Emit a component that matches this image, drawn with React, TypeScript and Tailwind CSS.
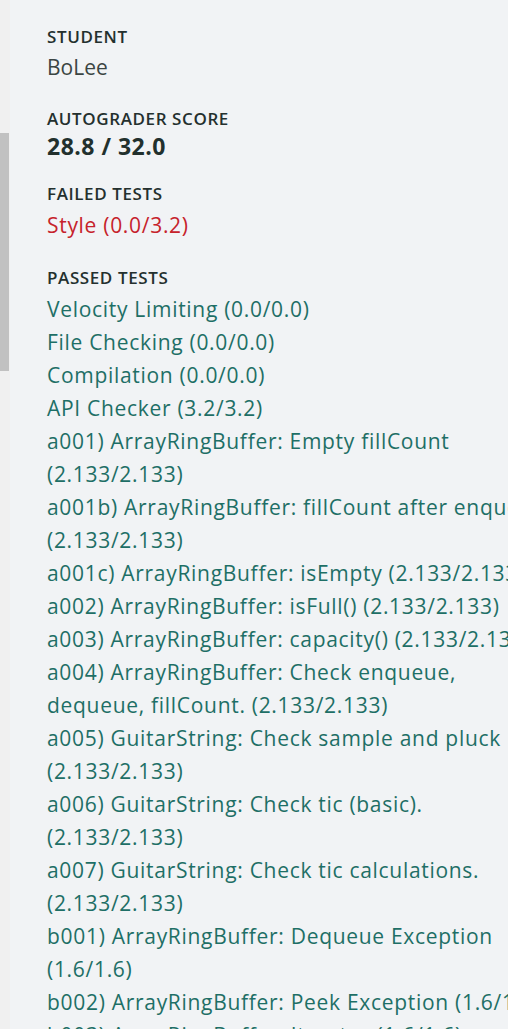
const passed: string[][] = [
  ["Velocity Limiting (0.0/0.0)"],
  ["File Checking (0.0/0.0)"],
  ["Compilation (0.0/0.0)"],
  ["API Checker (3.2/3.2)"],
  ["a001) ArrayRingBuffer: Empty fillCount", "(2.133/2.133)"],
  ["a001b) ArrayRingBuffer: fillCount after enqueue", "(2.133/2.133)"],
  ["a001c) ArrayRingBuffer: isEmpty (2.133/2.133)"],
  ["a002) ArrayRingBuffer: isFull() (2.133/2.133)"],
  ["a003) ArrayRingBuffer: capacity() (2.133/2.133)"],
  ["a004) ArrayRingBuffer: Check enqueue,", "dequeue, fillCount. (2.133/2.133)"],
  ["a005) GuitarString: Check sample and pluck", "(2.133/2.133)"],
  ["a006) GuitarString: Check tic (basic).", "(2.133/2.133)"],
  ["a007) GuitarString: Check tic calculations.", "(2.133/2.133)"],
  ["b001) ArrayRingBuffer: Dequeue Exception", "(1.6/1.6)"],
  ["b002) ArrayRingBuffer: Peek Exception (1.6/1.6)"],
  ["b003) ArrayRingBuffer: Iterator (1.6/1.6)"],
];

const Label = ({ children }: { children: React.ReactNode }) => (
  <div className="text-[17px] leading-[26px] font-semibold uppercase tracking-[0.6px] text-[#24302e]">{children}</div>
);

export default function App() {
  return (
    <div className="flex w-screen h-screen overflow-hidden bg-[#f1f3f5] font-['Open_Sans',sans-serif]">
      <div className="w-[10px] shrink-0 bg-[#f0f0f0] pt-[133px]">
        <div className="w-[9px] h-[238px] bg-[#c1c1c1]" />
      </div>
      <div className="shrink-0 pl-[37px] pt-[24px]">
        <div className="mb-[22px]">
          <Label>Student</Label>
          <div className="mt-[1px] text-[21px] leading-[33px] text-[#3b4543]">BoLee</div>
        </div>
        <div className="mb-[21px]">
          <Label>Autograder Score</Label>
          <div className="text-[23px] leading-[28px] font-bold tracking-[0.5px] text-[#22302d]">28.8 / 32.0</div>
        </div>
        <div className="mb-[23px]">
          <Label>Failed Tests</Label>
          <div className="mt-[2px] text-[21px] leading-[33px] tracking-[0.7px] text-[#c6222b]">Style (0.0/3.2)</div>
        </div>
        <div>
          <Label>Passed Tests</Label>
          <ul className="mt-[2px]">
            {passed.map((lines) => (
              <li key={lines[0]} className="text-[21px] leading-[33px] tracking-[0.7px] text-[#1e6f66]">
                {lines.map((l) => (
                  <div key={l} className="whitespace-nowrap">{l}</div>
                ))}
              </li>
            ))}
          </ul>
        </div>
      </div>
    </div>
  );
}
